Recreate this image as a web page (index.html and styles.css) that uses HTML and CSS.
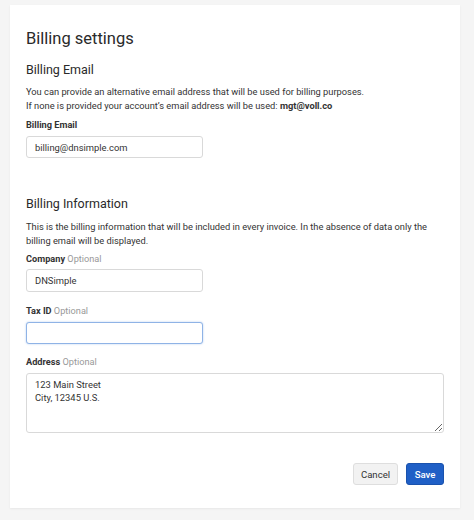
FILE: index.html
```html
<!DOCTYPE html>
<html>
<head>
<meta charset="utf-8">
<link rel="stylesheet" href="styles.css">
</head>
<body>
<div class="card">
  <h1 class="title">Billing settings</h1>
  <h2 class="section">Billing Email</h2>
  <p class="desc">You can provide an alternative email address that will be used for billing purposes.<br>If none is provided your account’s email address will be used: <b>mgt@voll.co</b></p>
  <label class="label">Billing Email</label>
  <input class="input" type="text" value="billing@dnsimple.com">

  <h2 class="section section-2">Billing Information</h2>
  <p class="desc desc-2">This is the billing information that will be included in every invoice. In the absence of data only the billing email will be displayed.</p>
  <label class="label label-company">Company <span class="opt">Optional</span></label>
  <input class="input input-company" type="text" value="DNSimple">
  <label class="label label-tax">Tax ID <span class="opt">Optional</span></label>
  <input class="input input-tax focus" type="text" value="">
  <label class="label label-address">Address <span class="opt">Optional</span></label>
  <textarea class="textarea">123 Main Street
City, 12345 U.S.</textarea>
  <div class="actions">
    <button class="btn btn-cancel">Cancel</button>
    <button class="btn btn-save">Save</button>
  </div>
</div>
</body>
</html>
```

FILE: styles.css
```css
html, body {
  margin: 0;
  padding: 0;
}
body {
  background: #f5f5f5;
  font-family: Roboto, "Liberation Sans", Arial, sans-serif;
  color: #333;
  width: 474px;
  height: 520px;
}
.card {
  background: #fff;
  margin: 5px 14px 0 10px;
  width: 450px;
  box-sizing: border-box;
  padding: 23px 16px 23px 16px;
  box-shadow: 0 1px 2px rgba(0,0,0,0.06);
  display: flex;
  flex-direction: column;
  align-items: flex-start;
}
.title {
  margin: 0;
  font-size: 16.5px;
  line-height: 22px;
  font-weight: 400;
  color: #2a2a2a;
}
.section {
  margin: 11px 0 0;
  font-size: 12.5px;
  line-height: 18px;
  font-weight: 400;
  color: #2a2a2a;
}
.section-2 {
  margin-top: 37px;
}
.desc {
  margin: 6px 0 0;
  font-size: 9.3px;
  line-height: 14px;
  color: #333;
}
.desc b {
  font-weight: 700;
}
.desc-2 {
  margin-top: 7px;
}
.label {
  display: block;
  margin-top: 5px;
  font-size: 9.2px;
  line-height: 14px;
  font-weight: 700;
  color: #333;
}
.label-company { margin-top: 4px; }
.label-tax { margin-top: 12px; }
.label-address { margin-top: 11px; }
.opt {
  font-weight: 400;
  color: #999;
}
.input {
  margin-top: 4px;
  width: 177px;
  height: 22px;
  box-sizing: border-box;
  border: 1px solid #d9d9d9;
  border-radius: 3px;
  padding: 0 8px;
  font-family: Roboto, "Liberation Sans", Arial, sans-serif;
  font-size: 9.4px;
  color: #333;
  background: #fff;
  outline: none;
}
.input-company {
  margin-top: 3px;
  height: 23px;
}
.focus {
  border-color: #8fb3e6;
  box-shadow: 0 0 2px rgba(80,140,220,0.45);
}
.textarea {
  margin-top: 4px;
  width: 418px;
  height: 60px;
  box-sizing: border-box;
  border: 1px solid #d9d9d9;
  border-radius: 3px;
  padding: 4px 8px;
  font-family: Roboto, "Liberation Sans", Arial, sans-serif;
  font-size: 9.4px;
  line-height: 13px;
  color: #333;
  outline: none;
}
.actions {
  margin-top: 30px;
  align-self: stretch;
  display: flex;
  justify-content: flex-end;
  gap: 8px;
}
.btn {
  height: 22px;
  box-sizing: border-box;
  border-radius: 3px;
  font-family: Roboto, "Liberation Sans", Arial, sans-serif;
  font-size: 9.6px;
  padding: 0;
  cursor: pointer;
}
.btn-cancel {
  width: 45px;
  background: #f2f2f2;
  border: 1px solid #dedede;
  color: #333;
}
.btn-save {
  width: 38px;
  background: #1f5fc6;
  border: 1px solid #1a52ad;
  color: #fff;
  font-weight: 500;
}
```
